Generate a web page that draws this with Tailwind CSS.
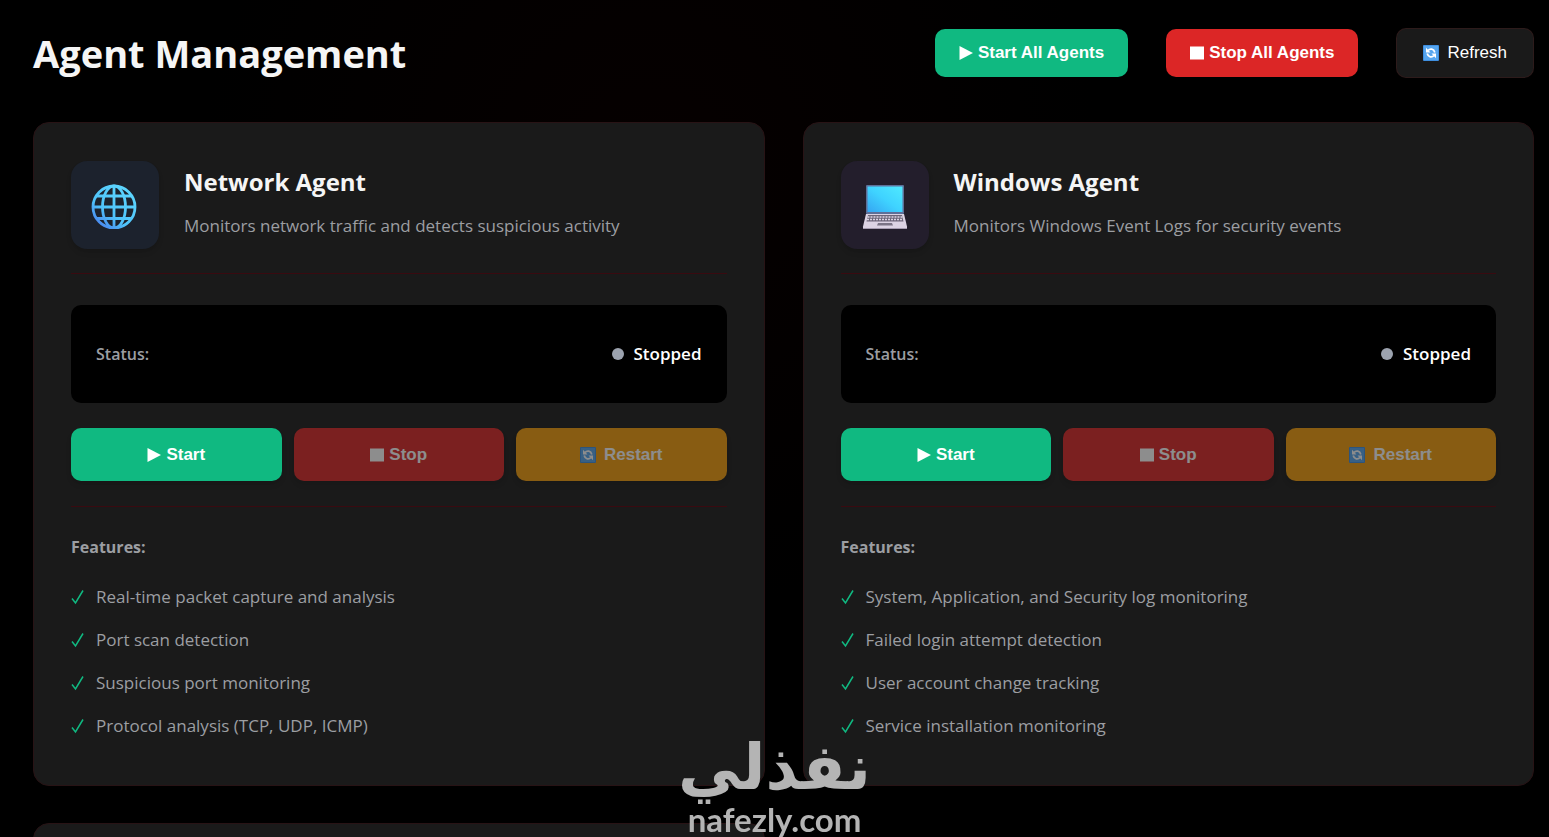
<!DOCTYPE html>
<html lang="en">
  <head>
    <meta charset="UTF-8" />
    <meta name="viewport" content="width=device-width, initial-scale=1.0" />
    <title>Agent Management</title>
    <script src="https://cdn.jsdelivr.net/npm/@tailwindcss/browser@4"></script>
  </head>
  <body
    class="h-screen overflow-hidden bg-black bg-[radial-gradient(circle_at_42%_20%,#060000_0%,#000000_40%)] font-['Open_Sans','Noto_Sans',sans-serif] text-[#f5f5f5]"
  >
    <!-- shared icons -->
    <svg class="hidden">
      <symbol id="refresh-icon" viewBox="0 0 16 16">
        <rect width="16" height="16" rx="1" fill="#3f8fe0" />
        <rect x="1" y="1" width="14" height="14" fill="#56a5ee" />
        <path d="M5 5.500C7 3.300 10.800 3.600 11.800 7.500M11 10.500C9 12.700 5.200 12.400 4.200 8.500" fill="none" stroke="#fff" stroke-width="1.800" />
        <path d="M3 2.800V7.500H7.500zM13 13.200V8.500H8.500z" fill="#fff" />
      </symbol>
      <symbol id="play-icon" viewBox="0 0 14 14">
        <path d="M0.500 0L14 7L0.500 14z" fill="currentColor" />
      </symbol>
      <symbol id="stop-icon" viewBox="0 0 14 14">
        <rect y="0.500" width="14" height="13" fill="currentColor" />
      </symbol>
      <symbol id="check-icon" viewBox="0 0 14 16">
        <path d="M1 9.500L4.500 14L12 1.500" fill="none" stroke="#10b981" stroke-width="1.500" />
      </symbol>
    </svg>

    <main class="pl-[33px] pr-[15px] pt-7">
      <header class="mb-11 flex items-center justify-between">
        <h1 class="text-[38px] font-bold leading-[50px]">Agent Management</h1>
        <div class="flex items-center gap-[38px] font-['Liberation_Sans',Arial,sans-serif] text-[17px] text-white">
          <button class="flex h-12 items-center gap-[5px] rounded-[10px] bg-[#10b981] px-6 font-bold">
            <svg class="size-3.5"><use href="#play-icon" /></svg>Start All Agents
          </button>
          <button class="flex h-12 items-center gap-[5px] rounded-[10px] bg-[#dc2626] px-6 font-bold">
            <svg class="size-3.5"><use href="#stop-icon" /></svg>Stop All Agents
          </button>
          <button class="flex h-[50px] items-center gap-2 rounded-[10px] border border-[#dc2626]/10 bg-[#1a1a1a] px-[26px]">
            <svg class="size-4"><use href="#refresh-icon" /></svg>Refresh
          </button>
        </div>
      </header>

      <div class="grid grid-cols-2 gap-x-[38px] gap-y-[37px]">
        <!-- network agent -->
        <section class="rounded-2xl border border-[#281315] bg-[#1a1a1a] px-[37px] py-[38px]">
          <div class="flex gap-[25px] border-b border-[#3a0a10] pb-6">
            <div class="flex size-[88px] shrink-0 items-center justify-center rounded-2xl bg-[#1c222d] shadow-md">
              <svg class="size-12" viewBox="0 0 48 48" fill="none" stroke="url(#globe)" stroke-width="2.800">
                <defs>
                  <linearGradient id="globe" gradientUnits="userSpaceOnUse" x1="38" y1="4" x2="8" y2="42">
                    <stop stop-color="#5ed8ff" />
                    <stop offset="0.700" stop-color="#4fc3fa" />
                    <stop offset="1" stop-color="#4a8df0" />
                  </linearGradient>
                </defs>
                <circle cx="23" cy="26" r="21" />
                <ellipse cx="23" cy="26" rx="11.500" ry="21" />
                <path d="M23 5V47.010" />
                <path d="M2 26H44.010M5 15H41M5 37.500H41" />
              </svg>
            </div>
            <div>
              <h2 class="mt-[3px] text-2xl font-bold leading-9">Network Agent</h2>
              <p class="mt-3 text-[17px] leading-7 text-[#9c9ea2]">Monitors network traffic and detects suspicious activity</p>
            </div>
          </div>
          <div class="mt-[31px] flex h-[98px] items-center justify-between rounded-[10px] bg-black px-[25px] font-semibold">
            <span class="text-base text-[#9c9ea2]">Status:</span>
            <span class="flex items-center gap-2.5 text-[17px] text-white"><i class="size-3 rounded-full bg-[#9ca3af]"></i>Stopped</span>
          </div>
          <div class="mt-[25px] grid grid-cols-3 gap-3 border-b border-[#3a0a10] pb-[25px] font-['Liberation_Sans',Arial,sans-serif] text-[17px] font-bold text-white">
            <button class="flex h-[53px] items-center justify-center gap-[5px] rounded-[10px] bg-[#10b981] shadow-md">
              <svg class="size-3.5"><use href="#play-icon" /></svg>Start
            </button>
            <button disabled class="flex h-[53px] items-center justify-center gap-[5px] rounded-[10px] bg-[#dc2626] opacity-50 shadow-md">
              <svg class="size-3.5"><use href="#stop-icon" /></svg>Stop
            </button>
            <button disabled class="flex h-[53px] items-center justify-center gap-2 rounded-[10px] bg-[#f59e0b] opacity-50 shadow-md">
              <svg class="size-4"><use href="#refresh-icon" /></svg>Restart
            </button>
          </div>
          <h3 class="mt-[26px] text-base font-bold leading-7 text-[#9c9ea2]">Features:</h3>
          <ul class="mt-3.5 text-[17px] leading-[27px] text-[#9c9ea2]">
            <li class="flex items-center gap-[11px] py-2"><svg class="h-4 w-3.5"><use href="#check-icon" /></svg>Real-time packet capture and analysis</li>
            <li class="flex items-center gap-[11px] py-2"><svg class="h-4 w-3.5"><use href="#check-icon" /></svg>Port scan detection</li>
            <li class="flex items-center gap-[11px] py-2"><svg class="h-4 w-3.5"><use href="#check-icon" /></svg>Suspicious port monitoring</li>
            <li class="flex items-center gap-[11px] py-2"><svg class="h-4 w-3.5"><use href="#check-icon" /></svg>Protocol analysis (TCP, UDP, ICMP)</li>
          </ul>
        </section>

        <!-- windows agent -->
        <section class="rounded-2xl border border-[#281315] bg-[#1a1a1a] px-[37px] py-[38px]">
          <div class="flex gap-[25px] border-b border-[#3a0a10] pb-6">
            <div class="flex size-[88px] shrink-0 items-center justify-center rounded-2xl bg-[#231e2c] shadow-md">
              <svg class="size-12" viewBox="0 0 48 48">
                <defs>
                  <linearGradient id="screen" x1="1" y1="0" x2="0" y2="1">
                    <stop stop-color="#4fe9ff" />
                    <stop offset="0.500" stop-color="#3fd3ff" />
                    <stop offset="1" stop-color="#35a5f2" />
                  </linearGradient>
                </defs>
                <rect x="5" y="4" width="38" height="29" rx="1" fill="#5d6f99" />
                <rect x="6.500" y="5.500" width="35" height="25.500" fill="url(#screen)" />
                <path d="M5 33H43L46 45.500V48H2V45.500z" fill="#dcd3e4" />
                <path d="M7 34H41L42.500 40.500H5.500z" fill="#6c6578" />
                <path d="M6.500 36H41.500M6 38.500H42" stroke="#dcd3e4" stroke-width="1.500" stroke-dasharray="2 1" />
                <path d="M17 42H31L32 44.500H16z" fill="#7b7486" />
                <path d="M2 47.500H46" stroke="#a59bb0" />
              </svg>
            </div>
            <div>
              <h2 class="mt-[3px] text-2xl font-bold leading-9">Windows Agent</h2>
              <p class="mt-3 text-[17px] leading-7 text-[#9c9ea2]">Monitors Windows Event Logs for security events</p>
            </div>
          </div>
          <div class="mt-[31px] flex h-[98px] items-center justify-between rounded-[10px] bg-black px-[25px] font-semibold">
            <span class="text-base text-[#9c9ea2]">Status:</span>
            <span class="flex items-center gap-2.5 text-[17px] text-white"><i class="size-3 rounded-full bg-[#9ca3af]"></i>Stopped</span>
          </div>
          <div class="mt-[25px] grid grid-cols-3 gap-3 border-b border-[#3a0a10] pb-[25px] font-['Liberation_Sans',Arial,sans-serif] text-[17px] font-bold text-white">
            <button class="flex h-[53px] items-center justify-center gap-[5px] rounded-[10px] bg-[#10b981] shadow-md">
              <svg class="size-3.5"><use href="#play-icon" /></svg>Start
            </button>
            <button disabled class="flex h-[53px] items-center justify-center gap-[5px] rounded-[10px] bg-[#dc2626] opacity-50 shadow-md">
              <svg class="size-3.5"><use href="#stop-icon" /></svg>Stop
            </button>
            <button disabled class="flex h-[53px] items-center justify-center gap-2 rounded-[10px] bg-[#f59e0b] opacity-50 shadow-md">
              <svg class="size-4"><use href="#refresh-icon" /></svg>Restart
            </button>
          </div>
          <h3 class="mt-[26px] text-base font-bold leading-7 text-[#9c9ea2]">Features:</h3>
          <ul class="mt-3.5 text-[17px] leading-[27px] text-[#9c9ea2]">
            <li class="flex items-center gap-[11px] py-2"><svg class="h-4 w-3.5"><use href="#check-icon" /></svg>System, Application, and Security log monitoring</li>
            <li class="flex items-center gap-[11px] py-2"><svg class="h-4 w-3.5"><use href="#check-icon" /></svg>Failed login attempt detection</li>
            <li class="flex items-center gap-[11px] py-2"><svg class="h-4 w-3.5"><use href="#check-icon" /></svg>User account change tracking</li>
            <li class="flex items-center gap-[11px] py-2"><svg class="h-4 w-3.5"><use href="#check-icon" /></svg>Service installation monitoring</li>
          </ul>
        </section>

        <section class="h-40 rounded-2xl border border-[#281315] bg-[#1a1a1a]"></section>
      </div>
    </main>

    <!-- watermark -->
    <div class="pointer-events-none fixed inset-x-0 bottom-0 flex flex-col items-center text-[#b4b4b4]">
      <span lang="ar" dir="rtl" class="font-['DejaVu_Sans',sans-serif] text-[63px] font-bold leading-[66px]">نفذلي</span>
      <span class="font-[Lato,sans-serif] text-[33px] font-bold leading-9">nafezly.com</span>
    </div>
  </body>
</html>
